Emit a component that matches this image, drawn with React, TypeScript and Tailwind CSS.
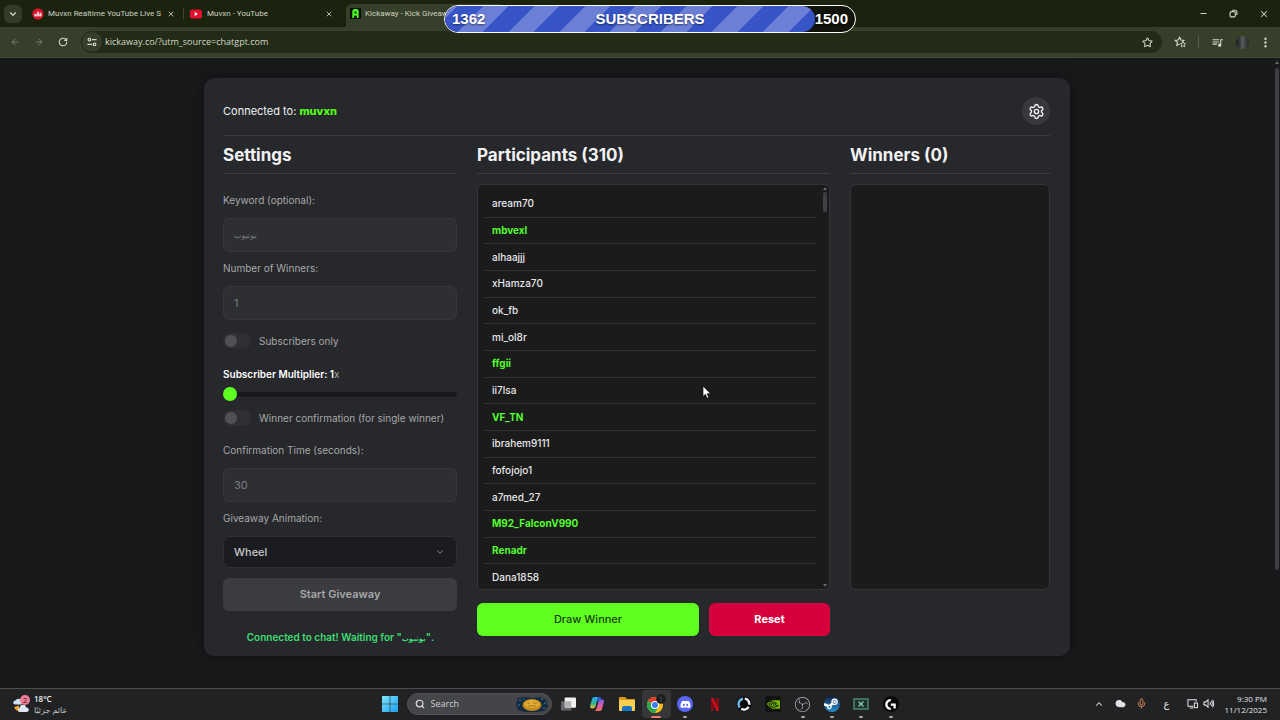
import React from "react";
import {
  ArrowLeft,
  ArrowRight,
  ChevronDown,
  ChevronUp,
  Cloud,
  EllipsisVertical,
  Mic,
  Minus,
  RotateCw,
  Search,
  Settings,
  Star,
  X,
} from "lucide-react";
import { SiLogitechg, SiNvidia, SiObsstudio } from "react-icons/si";
import { FaDiscord } from "react-icons/fa";
import { MdQueueMusic } from "react-icons/md";

const participants = [
  { name: "aream70", sub: false },
  { name: "mbvexl", sub: true },
  { name: "alhaajjj", sub: false },
  { name: "xHamza70", sub: false },
  { name: "ok_fb", sub: false },
  { name: "mi_ol8r", sub: false },
  { name: "ffgii", sub: true },
  { name: "ii7lsa", sub: false },
  { name: "VF_TN", sub: true },
  { name: "ibrahem9111", sub: false },
  { name: "fofojojo1", sub: false },
  { name: "a7med_27", sub: false },
  { name: "M92_FalconV990", sub: true },
  { name: "Renadr", sub: true },
  { name: "Dana1858", sub: false },
];

const labelClass = "block h-[18px] text-[10px] leading-[17px] text-[#a6a7a9]";
const inputClass =
  "mt-2 block h-[34px] w-full rounded-md border border-[#35363a] bg-[#2e2f33] px-[10px] text-[#7b7c80] outline-none";
const toggleClass =
  "relative h-4 w-7 shrink-0 appearance-none rounded-full bg-[#2f3034] before:absolute before:left-0.5 before:top-0.5 before:size-3 before:rounded-full before:bg-[#505155]";
const headingClass =
  "h-[38px] border-b border-[#3c3d41] text-[17px] leading-[38px] font-bold text-[#f1f2f3]";

function YouTubeIcon() {
  return (
    <svg viewBox="0 0 14 14" className="size-3.5 shrink-0" aria-hidden="true">
      <rect x="1" y="2.5" width="12" height="9" rx="2.6" fill="#e5102f" />
      <path d="M5.7 5v4l3.3-2z" fill="#fff" />
    </svg>
  );
}

function CounterIcon() {
  return (
    <svg viewBox="0 0 14 14" className="size-3 shrink-0" aria-hidden="true">
      <circle cx="7" cy="7" r="6.6" fill="#d9142d" />
      <path d="M3 9.8V6.6h2v3.2zM6 9.8V4.4h2v5.4zM9 9.8V5.6h2v4.2z" fill="#f6d9dc" />
      <path d="M3 8.2h8" stroke="#f6d9dc" strokeWidth="1.6" />
    </svg>
  );
}

function KickawayIcon() {
  return (
    <svg viewBox="0 0 12 12" className="size-[11px] shrink-0" aria-hidden="true">
      <rect width="12" height="12" fill="#071006" />
      <path d="M2.500 11V3L4 1h4l1.500 2v8h-2V8.500h-3V11z" fill="#4cf523" />
      <path d="M5 4h2v1.800H5z" fill="#071006" />
    </svg>
  );
}

function TabStrip() {
  return (
    <header className="flex h-[27px] items-end bg-[#1b230f] text-[#cdd3c2]">
      <button aria-label="Search tabs" className="mb-1 ml-1 flex size-[18px] shrink-0 items-center justify-center rounded-md bg-[#333c27]">
        <ChevronDown size={10} strokeWidth={3} />
      </button>
      <div className="flex h-[27px] min-w-0 flex-1 font-[Roboto,sans-serif] text-[8px]">
        <div className="ml-2.5 flex w-[151px] items-center gap-1 pr-2">
          <CounterIcon />
          <span className="flex-1 whitespace-nowrap">Muvxn Realtime YouTube Live S</span>
          <button aria-label="Close tab"><X size={8} strokeWidth={2.5} /></button>
        </div>
        <span className="my-2 w-px bg-[#3d4631]" />
        <div className="flex w-[158px] items-center gap-1 pr-[9px] pl-[5px]">
          <YouTubeIcon />
          <span className="flex-1 whitespace-nowrap">Muvxn - YouTube</span>
          <button aria-label="Close tab"><X size={8} strokeWidth={2.5} /></button>
        </div>
        <div className="mt-1 ml-1 flex w-[158px] items-center gap-1 rounded-t-md bg-[#363f29] pb-1 pl-1">
          <KickawayIcon />
          <span className="whitespace-nowrap">Kickaway - Kick Giveaw</span>
        </div>
      </div>
      <div className="flex h-[27px] items-center gap-[21px] pr-[11px]">
        <button aria-label="Minimize"><Minus size={9} strokeWidth={3} /></button>
        <button aria-label="Restore">
          <svg viewBox="0 0 10 10" className="size-[9px]" fill="none" stroke="currentColor" strokeWidth="1.3">
            <rect x="1.2" y="3" width="5.8" height="5.8" rx="1.5" />
            <path d="M3.4 1.4h3.2a2.2 2.2 0 0 1 2.2 2.2v3" />
          </svg>
        </button>
        <button aria-label="Close window"><X size={10} strokeWidth={2.5} /></button>
      </div>
    </header>
  );
}

function Toolbar() {
  return (
    <nav className="flex h-[31px] items-center border-b border-[#454c3b] bg-[#363f29] pr-2 pl-2.5 text-[#d3d9c8]">
      <div className="flex shrink-0 items-center gap-3.5">
        <button aria-label="Back" className="text-[#7a8270]"><ArrowLeft size={10} strokeWidth={2.2} /></button>
        <button aria-label="Forward" className="text-[#7a8270]"><ArrowRight size={10} strokeWidth={2.2} /></button>
        <button aria-label="Reload"><RotateCw size={10} strokeWidth={2.6} /></button>
      </div>
      <div className="ml-[13px] flex h-[22px] min-w-0 flex-1 items-center rounded-full bg-[#222b16] pr-[9px] pl-px">
        <button aria-label="Site information" className="flex size-5 items-center justify-center rounded-full bg-[#363f29]">
          <svg viewBox="0 0 12 12" className="size-2.5" fill="none" stroke="currentColor" strokeWidth="1.4">
            <circle cx="3" cy="3.2" r="1.6" />
            <path d="M6 3.2h5.5M.5 8.8H6" />
            <circle cx="9" cy="8.8" r="1.6" />
          </svg>
        </button>
        <input
          aria-label="Address"
          defaultValue="kickaway.co/?utm_source=chatgpt.com"
          className="ml-[3px] min-w-0 flex-1 bg-transparent text-[9px] outline-none"
        />
        <button aria-label="Bookmark this tab"><Star size={11} strokeWidth={2.2} /></button>
      </div>
      <div className="flex shrink-0 items-center">
        <button aria-label="Bookmarks" className="ml-3">
          <svg viewBox="0 0 14 14" className="size-3" fill="none" stroke="currentColor" strokeWidth="1.3" strokeLinejoin="round">
            <path d="M9.200 7.200l2.600-2.200L8 4.700 6.500 1.200 5 4.700 1.200 5l2.900 2.500-.9 3.700 3.300-2" />
            <path d="M10.500 6.500l1 2.200 2.200.2-1.700 1.500.5 2.200-2-1.200-2 1.200.5-2.200-1.700-1.500 2.200-.2z" strokeWidth="1" />
          </svg>
        </button>
        <span className="mx-3 h-3 w-px bg-[#56604a]" />
        <button aria-label="Media controls"><MdQueueMusic size={13} /></button>
        <span className="ml-3 size-[13px] rounded-full bg-linear-to-r from-[#15191a] via-[#585b58] to-[#22282a]" />
        <button aria-label="Menu" className="ml-2.5"><EllipsisVertical size={13} strokeWidth={2.6} /></button>
      </div>
    </nav>
  );
}

function SubscriberGoal() {
  return (
    <div className="absolute top-[5px] left-1/2 ml-[10px] flex h-7 w-[412px] -translate-x-1/2 items-center overflow-hidden rounded-full border border-white bg-[#10140b] font-['Liberation_Sans',sans-serif] text-[15px] font-bold text-white">
      <div className="absolute inset-y-0 left-0 w-[370px] rounded-full bg-[repeating-linear-gradient(135deg,#6c7fd6_0px,#6c7fd6_9px,#3855c8_9px,#3855c8_27px,#6c7fd6_27px,#6c7fd6_36px)]" />
      <div className="relative grid w-full grid-cols-[1fr_auto_1fr] items-center px-[7px] [text-shadow:0_1px_2px_#0008]">
        <span>1362</span>
        <span>SUBSCRIBERS</span>
        <span className="text-right">1500</span>
      </div>
    </div>
  );
}

function SettingsColumn() {
  return (
    <section className="min-w-0">
      <h2 className={headingClass}>Settings</h2>
      <form className="pt-[18px]" onSubmit={(e) => e.preventDefault()}>
        <label htmlFor="keyword" className={labelClass}>Keyword (optional):</label>
        <input id="keyword" className={inputClass + " text-[8px]"} defaultValue="يوتيوب" disabled />
        <label htmlFor="winners" className={labelClass + " mt-2"}>Number of Winners:</label>
        <input id="winners" className={inputClass + " text-[11px]"} defaultValue="1" disabled />
        <label className="mt-3 flex h-[18px] items-center gap-2 text-[10px] text-[#a6a7a9]">
          <input type="checkbox" className={toggleClass} disabled />
          Subscribers only
        </label>
        <label htmlFor="multiplier" className="mt-[15px] block h-[18px] text-[10px] leading-[18px] text-[#a6a7a9]">
          <span className="font-semibold text-white">Subscriber Multiplier: 1</span>x
        </label>
        <input
          id="multiplier"
          type="range"
          min="1"
          max="10"
          defaultValue="1"
          className="mt-1 block h-3.5 w-full appearance-none bg-transparent [&::-webkit-slider-runnable-track]:h-[5px] [&::-webkit-slider-runnable-track]:rounded-full [&::-webkit-slider-runnable-track]:bg-[#18191b] [&::-webkit-slider-thumb]:-mt-[5px] [&::-webkit-slider-thumb]:size-3.5 [&::-webkit-slider-thumb]:appearance-none [&::-webkit-slider-thumb]:rounded-full [&::-webkit-slider-thumb]:bg-[#5dff1f]"
        />
        <label className="mt-2 flex h-[18px] items-center gap-2 text-[10px] whitespace-nowrap text-[#a6a7a9]">
          <input type="checkbox" className={toggleClass} disabled />
          Winner confirmation (for single winner)
        </label>
        <label htmlFor="confirm" className={labelClass + " mt-[15px]"}>Confirmation Time (seconds):</label>
        <input id="confirm" className={inputClass + " text-[11px]"} defaultValue="30" disabled />
        <label htmlFor="animation" className={labelClass + " mt-2"}>Giveaway Animation:</label>
        <div className="relative mt-2">
          <select id="animation" className="block h-8 w-full appearance-none rounded-md border border-[#2f3034] bg-[#1b1c1f] px-[10px] text-[11px] font-medium text-[#c6c7c9] outline-none">
            <option>Wheel</option>
          </select>
          <ChevronDown size={10} className="pointer-events-none absolute top-[11px] right-3 text-[#a0a1a4]" />
        </div>
        <button className="mt-2.5 block h-[33px] w-full rounded-md bg-[#3b3c3f] text-[11px] font-semibold text-[#a7a8aa]">Start Giveaway</button>
        <p className="mt-[17px] h-[18px] text-center text-[10px] leading-[18px] font-semibold whitespace-nowrap text-[#3fdc74]">
          Connected to chat! Waiting for "<bdi className="text-[7px]">يوتيوب</bdi>".
        </p>
      </form>
    </section>
  );
}

function ParticipantsColumn() {
  return (
    <section className="flex min-w-0 flex-col">
      <h2 className={headingClass}>Participants (310)</h2>
      <div className="mt-2.5 flex flex-1 rounded-md border border-[#333437] bg-[#1b1b1c]">
        <ul className="-mb-0.5 grid flex-1 auto-rows-fr pt-1.5 pl-1.5 text-[10px] text-[#e6e7e8]">
          {participants.map((p) => (
            <li key={p.name} className="flex items-center border-b border-[#333435] px-2 last:border-transparent">
              <span className={p.sub ? "font-bold text-[#53fc2f]" : "font-medium"}>{p.name}</span>
            </li>
          ))}
        </ul>
        <div className="ml-2 flex w-1.5 flex-col items-start justify-between py-0.5">
          <div className="flex flex-col items-center gap-0.5">
            <svg viewBox="0 0 4 3" className="h-[3px] w-1"><path d="M0 3l2-3 2 3z" fill="#66676a" /></svg>
            <span className="h-5 w-1 rounded-xs bg-[#3f4043]" />
          </div>
          <svg viewBox="0 0 4 3" className="h-[3px] w-1"><path d="M0 0l2 3 2-3z" fill="#66676a" /></svg>
        </div>
      </div>
      <div className="mt-[13px] mb-2.5 grid grid-cols-[222fr_121fr] gap-2.5 text-[11px]">
        <button className="h-[33px] rounded-md bg-[#60ff20] font-medium text-[#16400d]">Draw Winner</button>
        <button className="h-[33px] rounded-md bg-[#d5003c] font-bold text-white">Reset</button>
      </div>
    </section>
  );
}

function GiveawayCard() {
  return (
    <main className="mx-auto w-full max-w-[866px] rounded-[10px] bg-[#27282b] pt-[19px] pr-5 pb-2.5 pl-[19px] font-[Inter,'DejaVu_Sans',sans-serif] shadow-[0_0_16px_#0006]">
      <div className="flex items-center justify-between border-b border-[#3c3d41] pb-2.5">
        <p className="text-[11px] text-[#f1f2f3]">
          Connected to: <strong className="font-extrabold text-[#53fc18]">muvxn</strong>
        </p>
        <button aria-label="Settings" className="flex size-7 items-center justify-center rounded-full bg-[#37383b] text-[#eeeff0]">
          <Settings size={17} strokeWidth={2} />
        </button>
      </div>
      <div className="grid grid-cols-[minmax(0,234fr)_minmax(0,353fr)_minmax(0,200fr)] gap-5">
        <SettingsColumn />
        <ParticipantsColumn />
        <section className="flex flex-col">
          <h2 className={headingClass}>Winners (0)</h2>
          <div className="mt-2.5 mb-14 flex-1 rounded-md border border-[#333437] bg-[#1b1b1c]" />
        </section>
      </div>
    </main>
  );
}

function WindowsIcon() {
  return (
    <svg viewBox="0 0 16 16" className="size-4" aria-hidden="true">
      <defs>
        <linearGradient id="win" x1="0" y1="0" x2="1" y2="1">
          <stop offset="0" stopColor="#7be6fb" />
          <stop offset="1" stopColor="#1d9ff0" />
        </linearGradient>
      </defs>
      <path d="M0 0h7.700v7.700H0zM8.300 0H16v7.700H8.300zM0 8.300h7.700V16H0zM8.300 8.300H16V16H8.300z" fill="url(#win)" />
    </svg>
  );
}

function SearchArt() {
  return (
    <svg viewBox="0 0 34 16" className="h-4 w-[34px]" aria-hidden="true">
      <path d="M3 2l6-1 8 1 9-1 5 3 2 6-4 5-9 1H9l-6-2-2-6z" fill="#142b40" />
      <g fill="#5e8cab">
        <circle cx="5" cy="4" r=".8" /><circle cx="9" cy="3" r=".6" /><circle cx="27" cy="3" r=".8" />
        <circle cx="30" cy="7" r=".8" /><circle cx="4" cy="9" r=".7" /><circle cx="29" cy="12" r=".7" />
      </g>
      <ellipse cx="17" cy="9" rx="9.500" ry="6" fill="#c58a1d" />
      <ellipse cx="17" cy="8" rx="7.500" ry="4" fill="#e0ad34" />
      <path d="M12 7h3M18 7h4M13 10h8" stroke="#a87420" fill="none" />
    </svg>
  );
}

function TaskViewIcon() {
  return (
    <svg viewBox="0 0 17 16" className="size-4">
      <rect x="1" y="5" width="11" height="10" rx="1" fill="#65676a" />
      <rect x="5" y="1" width="12" height="11" rx="1" fill="#f0f0f0" />
      <path d="M5 5h7v7H6a1 1 0 0 1-1-1z" fill="#b3b4b6" />
    </svg>
  );
}

function CopilotIcon() {
  return (
    <svg viewBox="0 0 16 16" className="size-4">
      <defs>
        <linearGradient id="cpA" x1="0" y1="0" x2="0" y2="1">
          <stop offset="0" stopColor="#2aa5ee" /><stop offset=".55" stopColor="#35b58e" /><stop offset="1" stopColor="#e9bb2b" />
        </linearGradient>
        <linearGradient id="cpB" x1="0" y1="0" x2="0" y2="1">
          <stop offset="0" stopColor="#8061e8" /><stop offset=".5" stopColor="#d75bb0" /><stop offset="1" stopColor="#f2705a" />
        </linearGradient>
      </defs>
      <path d="M5 1h5.500Q9 1.500 8.300 4L6.500 10.500Q6 12.500 4 12.500H3Q.5 12.500 1.200 9.500L3 3.300Q3.500 1 5 1z" fill="url(#cpA)" />
      <path d="M11 15H5.500Q7 14.500 7.700 12l1.800-6.500Q10 3.500 12 3.500h1q2.500 0 1.800 3L13 12.700Q12.500 15 11 15z" fill="url(#cpB)" />
      <path d="M8.500 1h2q1.500 0 2 2.500H12Q10 3.500 9.300 6L8 5z" fill="#255fd2" />
    </svg>
  );
}

function ExplorerIcon() {
  return (
    <svg viewBox="0 0 18 16" className="h-4 w-[18px]">
      <path d="M1 2a1 1 0 0 1 1-1h5l2 2h7a1 1 0 0 1 1 1v3H1z" fill="#d99b1d" />
      <rect x="1" y="4" width="16" height="11" rx="1" fill="#f8cf50" />
      <path d="M4 15v-3a2 2 0 0 1 2-2h6a2 2 0 0 1 2 2v3z" fill="#1674c4" />
    </svg>
  );
}

function ChromeIcon() {
  return (
    <svg viewBox="0 0 20 20" className="size-5">
      <circle cx="9" cy="11" r="8" fill="#fbbf16" />
      <path d="M9 11L2.070 7A8 8 0 0 1 15.930 7z" fill="#e33b2e" />
      <path d="M9 11L2.070 7A8 8 0 0 0 9 19l3.500-6z" fill="#2da44e" />
      <circle cx="9" cy="11" r="4" fill="#fff" />
      <circle cx="9" cy="11" r="3" fill="#3b7ded" />
      <circle cx="15" cy="5" r="4.800" fill="#1c1d1f" />
      <path d="M14 3q2 1 1 5" stroke="#3d4042" fill="none" strokeWidth="1.500" />
    </svg>
  );
}

function RingIcon() {
  return (
    <svg viewBox="0 0 16 16" className="size-4" fill="none" strokeWidth="2.400">
      <circle cx="8" cy="8" r="7.500" fill="#08090b" />
      <path d="M8.800 2.600a5.400 5.400 0 0 1 4.500 6.200" stroke="#f3f4f5" />
      <path d="M12.600 10.800a5.400 5.400 0 0 1-7.300 1.900" stroke="#f3f4f5" />
      <path d="M3.800 11.400A5.400 5.400 0 0 1 7 2.700" stroke="#72b6e6" />
    </svg>
  );
}

function NetflixIcon() {
  return (
    <svg viewBox="0 0 8 13" className="h-[13px] w-2">
      <path d="M0 0h2.700v13H0zM5.300 0H8v13H5.300z" fill="#8f0b14" />
      <path d="M0 0h2.700L8 13H5.300z" fill="#cf0d1b" />
    </svg>
  );
}

function SteamIcon() {
  return (
    <svg viewBox="0 0 16 16" className="size-4">
      <defs>
        <linearGradient id="steam" x1="0" y1="0" x2="0" y2="1">
          <stop offset="0" stopColor="#10234a" />
          <stop offset="1" stopColor="#2790cf" />
        </linearGradient>
      </defs>
      <circle cx="8" cy="8" r="8" fill="url(#steam)" />
      <path d="M0 8.200l5.500 2.300L8 8 10.300 5" stroke="#fff" strokeWidth="2.600" fill="none" />
      <circle cx="10.600" cy="5.800" r="3.200" fill="#fff" />
      <circle cx="10.600" cy="5.800" r="1.900" fill="#1c4a80" />
      <circle cx="10.600" cy="5.800" r="1.300" fill="#fff" />
      <circle cx="5.400" cy="11" r="2.300" fill="#fff" />
      <circle cx="5.400" cy="11" r="1" fill="#2378b5" />
    </svg>
  );
}

function NvidiaIcon() {
  return (
    <span className="flex size-4 items-center justify-center rounded-xs bg-[#101310] text-[#76b900]">
      <SiNvidia size={13} />
    </span>
  );
}

function ScreenXIcon() {
  return (
    <svg viewBox="0 0 16 12" className="h-3 w-4" fill="none" stroke="#5d9c86" strokeWidth="1.200">
      <rect x="1" y="1" width="14" height="10" fill="#1d302b" />
      <path d="M5.500 3.500l5 5M10.500 3.500l-5 5" stroke="#8fd0b8" />
    </svg>
  );
}

const apps: { name: string; icon: React.ReactNode; open?: boolean; active?: boolean }[] = [
  { name: "Task view", icon: <TaskViewIcon /> },
  { name: "Copilot", icon: <CopilotIcon /> },
  { name: "File Explorer", icon: <ExplorerIcon /> },
  { name: "Chrome", icon: <ChromeIcon />, active: true },
  {
    name: "Discord",
    icon: (
      <span className="flex size-4 items-center justify-center rounded-full bg-[#5865f2] text-white">
        <FaDiscord size={11} />
      </span>
    ),
    open: true,
  },
  { name: "Netflix", icon: <NetflixIcon /> },
  { name: "Ring", icon: <RingIcon /> },
  { name: "NVIDIA", icon: <NvidiaIcon /> },
  { name: "OBS Studio", icon: <SiObsstudio size={15} color="#b9babc" />, open: true },
  { name: "Steam", icon: <SteamIcon />, open: true },
  { name: "Screen", icon: <ScreenXIcon />, open: true },
  {
    name: "Logitech G HUB",
    icon: (
      <span className="flex size-4 items-center justify-center rounded-full bg-[#08090a] text-white">
        <SiLogitechg size={11} />
      </span>
    ),
    open: true,
  },
];

function Taskbar() {
  return (
    <footer className="grid h-8 grid-cols-[1fr_auto_1fr] items-center border-t border-[#4b4c4e] bg-[#202224] pb-0.5 text-[8px] text-[#eeeeee]">
      <div className="flex items-center gap-1 pl-3">
        <svg viewBox="0 0 18 18" className="size-[18px]" aria-hidden="true">
          <path d="M2 12a6 6 0 0 0 9 3.500 6 6 0 0 1-4-5z" fill="#f2a33c" />
          <path d="M3 9.500a2 2 0 0 1 .5-4 3.200 3.200 0 0 1 6 1v3z" fill="#cfe0f5" />
          <path d="M8 17a2 2 0 0 1 0-4 3 3 0 0 1 6-.5 2.300 2.300 0 0 1 1 4.500z" fill="#dfe7f6" />
          <circle cx="13" cy="5" r="5" fill="#ee7f96" />
          <text x="13" y="8" fontSize="8" textAnchor="middle" fill="#3d1620">2</text>
        </svg>
        <div className="leading-[11px]">
          <div className="font-semibold">18°C</div>
          <div className="text-[#c4c5c7]" dir="rtl">غائم جزئيًا</div>
        </div>
      </div>
      <div className="flex h-full items-center pl-[7px]">
        <button aria-label="Start" className="mr-[9px]"><WindowsIcon /></button>
        <div className="flex h-[22px] w-[145px] items-center rounded-full border border-[#515356] bg-[#434548] pr-0.5 pl-[7px]">
          <Search size={10} strokeWidth={2.8} className="shrink-0 text-[#dcdddf]" />
          <input aria-label="Search" placeholder="Search" className="ml-1.5 min-w-0 flex-1 bg-transparent text-[9px] outline-none placeholder:text-[#cfd0d2]" />
          <SearchArt />
        </div>
        <div className="ml-0.5 grid h-full w-[352px] grid-cols-12">
          {apps.map((a) => (
            <button
              key={a.name}
              aria-label={a.name}
              className={
                a.active
                  ? "relative mt-px flex items-center justify-center rounded-sm bg-[#343638]"
                  : "relative mt-px flex items-center justify-center"
              }
            >
              {a.icon}
              {a.active && <span className="absolute bottom-0 h-0.5 w-2.5 rounded-full bg-[#f0796c]" />}
              {a.open && <span className="absolute bottom-0 h-0.5 w-1 rounded-full bg-[#a2a4a6]" />}
            </button>
          ))}
        </div>
      </div>
      <div className="flex items-center justify-end pr-[13px] text-[#e3e4e6]">
        <ChevronUp size={10} strokeWidth={2.5} />
        <Cloud size={11} fill="currentColor" className="ml-[11px]" />
        <Mic size={11} className="ml-2.5 text-[#e58a5b]" />
        <span className="ml-[17px] text-[10px]">ع</span>
        <svg viewBox="0 0 12 12" className="ml-[17px] size-[11px]" fill="none" stroke="currentColor" strokeWidth="1.100">
          <path d="M7 9H1V2h9v2M3 11h4" />
          <rect x="8" y="5.500" width="3.500" height="5" />
        </svg>
        <svg viewBox="0 0 12 12" className="ml-[5px] size-[11px]" fill="none" stroke="currentColor" strokeWidth="1.100">
          <path d="M1 4.500h1.500L5.500 2v8l-3-2.500H1zM7.500 4.500q1.200 1.500 0 3M9 3q2.400 3 0 6M10.500 2q2.200 4 0 8" />
        </svg>
        <div className="ml-[11px] text-right leading-[11px] whitespace-nowrap">
          <div>9:30 PM</div>
          <div>11/12/2025</div>
        </div>
      </div>
    </footer>
  );
}

export default function App() {
  return (
    <div className="relative flex min-h-screen flex-col bg-[#18191b] font-['Open_Sans','DejaVu_Sans',sans-serif]">
      <TabStrip />
      <Toolbar />
      <div className="flex flex-1">
        <div className="min-w-0 flex-1 py-5">
          <GiveawayCard />
        </div>
        <div className="flex w-1.5 flex-col items-center gap-1 pt-[3px]">
          <svg viewBox="0 0 4 3" className="h-[3px] w-1"><path d="M0 3l2-3 2 3z" fill="#66676a" /></svg>
          <span className="mb-[118px] w-1 flex-1 rounded-full bg-[#3d3e41]" />
        </div>
      </div>
      <Taskbar />
      <SubscriberGoal />
      <svg viewBox="0 0 10 14" className="pointer-events-none absolute top-[385px] left-[702px] h-3.5 w-2.5" aria-hidden="true">
        <path d="M1 1v10.500l2.400-2.200 1.700 3.900 1.700-.8-1.700-3.700h3.400z" fill="#fff" stroke="#111" strokeWidth=".7" />
      </svg>
    </div>
  );
}
